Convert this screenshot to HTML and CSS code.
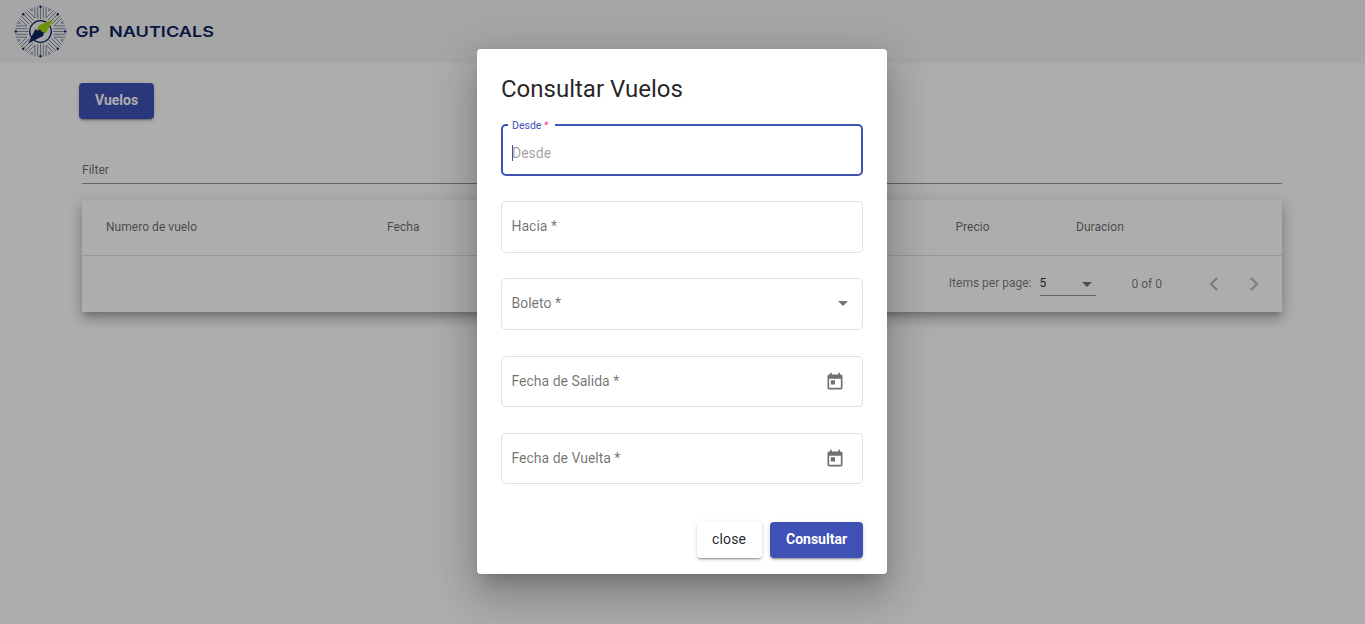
FILE: index.html
```html
<!DOCTYPE html>
<html lang="es">
<head>
<meta charset="utf-8">
<title>GP Nauticals</title>
<link rel="stylesheet" href="styles.css">
</head>
<body>
<svg class="defs" width="0" height="0" aria-hidden="true">
  <defs>
    <g id="ray" fill="none" stroke="#7c86a3" stroke-width=".9">
      <path d="M0-12V-25M2.8-13V-25.2M-2.8-13V-25.2M5.6-13.5V-24.6M-5.6-13.5V-24.6M8.4-20.3V-23.8M-8.4-20.3V-23.8"/>
    </g>
    <path id="calendar" d="M19 3h-1V1h-2v2H8V1H6v2H5c-1.11 0-1.99.9-1.99 2L3 19c0 1.1.89 2 2 2h14c1.1 0 2-.9 2-2V5c0-1.1-.9-2-2-2zm0 16H5V8h14v11zM7 10h5v5H7z"/>
  </defs>
</svg>
<div class="page">
  <header class="topbar">
    <svg class="logo" width="54" height="54" viewBox="-26.5 -26.5 54 54">
      <use href="#ray"/><use href="#ray" transform="rotate(45)"/><use href="#ray" transform="rotate(90)"/><use href="#ray" transform="rotate(135)"/>
      <use href="#ray" transform="rotate(180)"/><use href="#ray" transform="rotate(225)"/><use href="#ray" transform="rotate(270)"/><use href="#ray" transform="rotate(315)"/>
      <g fill="#0c2461">
        <circle cy="-24.7" r="1.2"/><circle cy="24.7" r="1.2"/><circle cx="-24.7" r="1.2"/><circle cx="24.7" r="1.2"/>
        <circle cx="-17.3" cy="-17.3" r="1.2"/><circle cx="17.3" cy="-17.3" r="1.2"/><circle cx="-17.3" cy="17.3" r="1.2"/><circle cx="17.3" cy="17.3" r="1.2"/>
      </g>
      <circle r="10.8" fill="#f5f5f5" stroke="#0c2461" stroke-width="1.3"/>
      <path d="M12.8-12.3L-1-6.5L-3.8-2.2L-.5 1.8L5.5 1.5z" fill="#a5d610"/>
      <path d="M-12.4 12L-5.2-2.3L-2-.8L-.5-2.5L1 .2L3.5 1L2.6 4.5z" fill="#0c2461"/>
    </svg>
    <svg class="wordmark" width="140" height="20" viewBox="0 0 140 20">
      <text x="-.5" y="15" textLength="24" lengthAdjust="spacingAndGlyphs">GP</text>
      <text x="33" y="15" textLength="105" lengthAdjust="spacingAndGlyphs">NAUTICALS</text>
    </svg>
  </header>
  <main class="content">
    <button class="btn primary">Vuelos</button>
    <div class="filter">Filter</div>
    <section class="table">
      <div class="head"><span>Numero de vuelo</span><span>Fecha</span><span></span><span>Precio</span><span>Duracion</span></div>
      <div class="paginator">
        <span class="per-page">Items per page:</span>
        <span class="page-size">5<i class="caret"></i></span>
        <span class="range">0 of 0</span>
        <svg width="28" height="28" viewBox="0 0 24 24"><path d="M15.41 7.41L14 6l-6 6 6 6 1.41-1.41L10.83 12z"/></svg>
        <svg width="28" height="28" viewBox="0 0 24 24"><path d="M10 6L8.59 7.41 13.17 12l-4.58 4.59L10 18l6-6z"/></svg>
      </div>
    </section>
  </main>
</div>
<div class="backdrop">
  <div class="dialog">
    <h1>Consultar Vuelos</h1>
    <form class="fields">
      <div class="field focused"><span class="float">Desde <b>*</b></span><span class="placeholder">Desde</span></div>
      <div class="field"><span>Hacia *</span></div>
      <div class="field select"><span>Boleto *</span><i class="caret"></i></div>
      <div class="field date"><span>Fecha de Salida *</span><svg width="20" height="20" viewBox="0 0 24 24"><use href="#calendar"/></svg></div>
      <div class="field date"><span>Fecha de Vuelta *</span><svg width="20" height="20" viewBox="0 0 24 24"><use href="#calendar"/></svg></div>
    </form>
    <div class="actions"><button class="btn plain">close</button><button class="btn primary">Consultar</button></div>
  </div>
</div>
</body>
</html>
```
FILE: styles.css
```css
* { box-sizing: border-box; }
body { margin: 0; height: 624px; overflow: hidden; background: #fff; color: rgba(0,0,0,.87); font-family: Roboto, sans-serif; }
.defs { position: absolute; }
.topbar { height: 63px; padding: 0 14px; display: flex; align-items: center; gap: 8px; background: #f5f5f5; }
.wordmark { overflow: visible; }
.wordmark text { font: 600 15px Inter, sans-serif; fill: #0c2461; }
.btn { height: 36px; padding: 0 16px 2px; border: 0; border-radius: 4px; font: 500 14px/34px Roboto, sans-serif; box-shadow: 0 3px 1px -2px rgba(0,0,0,.2), 0 2px 2px rgba(0,0,0,.14), 0 1px 5px rgba(0,0,0,.12); white-space: nowrap; }
.primary { background: #3f51b5; color: #fff; font-weight: 700; }
.plain { width: 65px; padding-left: 15px; background: #fff; color: rgba(0,0,0,.87); font-weight: 400; letter-spacing: .15px; }
.content { padding: 20px 83px 0 79px; }
.content > .btn { display: block; width: 75px; }
.filter { margin: 43px 0 0 3px; height: 22px; border-bottom: 1px solid rgba(0,0,0,.42); font-size: 12px; line-height: 16px; color: rgba(0,0,0,.6); }
.table { margin: 16px 0 0 3px; height: 112px; background: #fff; box-shadow: 0 5px 5px -3px rgba(0,0,0,.2), 0 8px 10px 1px rgba(0,0,0,.14), 0 3px 14px 2px rgba(0,0,0,.12); }
.head { height: 56px; padding: 0 24px 2px; display: grid; grid-template-columns: 281px 284px 284.5px 120.5px 1fr; align-items: center; border-bottom: 1px solid rgba(0,0,0,.12); font-size: 12px; letter-spacing: .04px; color: rgba(0,0,0,.6); }
.paginator { height: 56px; padding-right: 14px; display: flex; align-items: center; justify-content: flex-end; font-size: 12px; color: rgba(0,0,0,.54); }
.per-page, .page-size { margin-top: -2px; }
.page-size { width: 56px; height: 26px; margin: -2px 36px 0 8px; padding-right: 4px; display: flex; align-items: center; justify-content: space-between; border-bottom: 1px solid rgba(0,0,0,.42); color: rgba(0,0,0,.87); }
.page-size .caret { margin-top: 3px; }
.range { margin-right: 38px; }
.paginator svg { fill: rgba(0,0,0,.26); }
.paginator svg + svg { margin-left: 12px; }
.caret { border: 5px solid transparent; border-top-color: rgba(0,0,0,.54); border-bottom: 0; }
.backdrop { position: absolute; inset: 0; display: flex; align-items: flex-start; justify-content: center; padding: 49px 1px 0 0; background: rgba(0,0,0,.32); }
.dialog { width: 410px; height: 525px; padding: 24px; border-radius: 4px; background: #fff; box-shadow: 0 11px 15px -7px rgba(0,0,0,.2), 0 24px 38px 3px rgba(0,0,0,.14), 0 9px 46px 8px rgba(0,0,0,.12); }
h1 { margin: 0 0 19px; font: 400 24px/32px Roboto, sans-serif; }
.fields { display: grid; gap: 25px; }
.field { position: relative; height: 52px; padding: 0 14px 2px 9.5px; display: flex; align-items: center; justify-content: space-between; border: 1px solid rgba(0,0,0,.12); border-radius: 5px; font-size: 14px; color: rgba(0,0,0,.56); }
.focused { border: 2px solid #3f51b5; padding: 6px 9px 0; }
.float { position: absolute; left: 5px; top: -7px; width: 47px; padding-left: 4px; background: #fff; font-size: 10.5px; line-height: 14px; color: #3f51b5; }
.float b { font-weight: 400; color: #ff4081; }
.placeholder { line-height: 16px; color: rgba(0,0,0,.38); border-left: 1px solid #3f51b5; text-indent: -1px; }
.date { height: 51px; margin-top: 1px; padding-right: 17.5px; }
.date svg { position: relative; top: 1px; fill: rgba(0,0,0,.56); }
.actions { margin-top: 38px; display: flex; justify-content: flex-end; gap: 8px; }
.actions .primary { width: 93px; }
```
